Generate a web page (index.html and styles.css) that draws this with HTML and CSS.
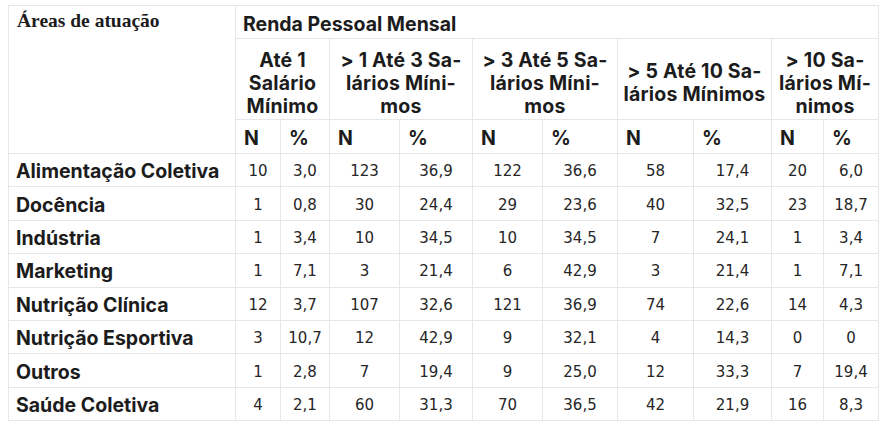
FILE: index.html
```html
<!DOCTYPE html>
<html lang="pt">
<head>
<meta charset="utf-8">
<link rel="stylesheet" href="styles.css">
</head>
<body>
<div class="page">
<table class="tbl">
  <colgroup>
    <col class="c-area">
    <col class="c1"><col class="c2">
    <col class="c3"><col class="c4">
    <col class="c5"><col class="c6">
    <col class="c7"><col class="c8">
    <col class="c9"><col class="c10">
  </colgroup>
  <thead>
    <tr class="r-top">
      <th class="area-h" rowspan="3">Áreas de atuação</th>
      <th class="renda" colspan="10">Renda Pessoal Mensal</th>
    </tr>
    <tr class="r-group">
      <th class="grp" colspan="2">Até 1<br>Salário<br>Mínimo</th>
      <th class="grp" colspan="2">&gt; 1 Até 3 Sa-<br>lários Míni-<br>mos</th>
      <th class="grp" colspan="2">&gt; 3 Até 5 Sa-<br>lários Míni-<br>mos</th>
      <th class="grp" colspan="2">&gt; 5 Até 10 Sa-<br>lários Mínimos</th>
      <th class="grp" colspan="2">&gt; 10 Sa-<br>lários Mí-<br>nimos</th>
    </tr>
    <tr class="r-np">
      <th class="np">N</th><th class="np">%</th>
      <th class="np">N</th><th class="np">%</th>
      <th class="np">N</th><th class="np">%</th>
      <th class="np">N</th><th class="np">%</th>
      <th class="np">N</th><th class="np">%</th>
    </tr>
  </thead>
  <tbody>
    <tr><th class="area">Alimentação Coletiva</th><td>10</td><td>3,0</td><td>123</td><td>36,9</td><td>122</td><td>36,6</td><td>58</td><td>17,4</td><td>20</td><td>6,0</td></tr>
    <tr><th class="area">Docência</th><td>1</td><td>0,8</td><td>30</td><td>24,4</td><td>29</td><td>23,6</td><td>40</td><td>32,5</td><td>23</td><td>18,7</td></tr>
    <tr><th class="area">Indústria</th><td>1</td><td>3,4</td><td>10</td><td>34,5</td><td>10</td><td>34,5</td><td>7</td><td>24,1</td><td>1</td><td>3,4</td></tr>
    <tr><th class="area">Marketing</th><td>1</td><td>7,1</td><td>3</td><td>21,4</td><td>6</td><td>42,9</td><td>3</td><td>21,4</td><td>1</td><td>7,1</td></tr>
    <tr><th class="area">Nutrição Clínica</th><td>12</td><td>3,7</td><td>107</td><td>32,6</td><td>121</td><td>36,9</td><td>74</td><td>22,6</td><td>14</td><td>4,3</td></tr>
    <tr><th class="area">Nutrição Esportiva</th><td>3</td><td>10,7</td><td>12</td><td>42,9</td><td>9</td><td>32,1</td><td>4</td><td>14,3</td><td>0</td><td>0</td></tr>
    <tr><th class="area">Outros</th><td>1</td><td>2,8</td><td>7</td><td>19,4</td><td>9</td><td>25,0</td><td>12</td><td>33,3</td><td>7</td><td>19,4</td></tr>
    <tr><th class="area">Saúde Coletiva</th><td>4</td><td>2,1</td><td>60</td><td>31,3</td><td>70</td><td>36,5</td><td>42</td><td>21,9</td><td>16</td><td>8,3</td></tr>
  </tbody>
</table>
</div>
</body>
</html>
```

FILE: styles.css
```css
html, body {
  margin: 0;
  padding: 0;
  background: #ffffff;
}
body {
  width: 884px;
  height: 428px;
  overflow: hidden;
}
.page {
  padding: 5px 0 0 8px;
}
.tbl {
  border-collapse: collapse;
  table-layout: fixed;
  width: 871px;
  color: #1c1c1c;
  font-family: Inter, "Noto Sans", sans-serif;
}
.tbl th, .tbl td {
  border: 1px solid #e6e6e6;
  padding: 0;
}
.c-area { width: 227px; }
.c1 { width: 45px; }
.c2 { width: 49px; }
.c3 { width: 70px; }
.c4 { width: 73px; }
.c5 { width: 70px; }
.c6 { width: 75px; }
.c7 { width: 76px; }
.c8 { width: 78px; }
.c9 { width: 52px; }
.c10 { width: 55px; }

.r-top { height: 33px; }
.r-group { height: 81px; }
.r-np { height: 34px; }
.tbl tbody tr { height: 33.4px; }

.tbl .area-h {
  font-family: "Liberation Serif", "Times New Roman", serif;
  font-weight: bold;
  font-size: 19.5px;
  text-align: left;
  vertical-align: top;
  padding: 4px 0 0 8px;
}
.tbl .renda {
  font-weight: 700;
  font-size: 19.5px;
  text-align: left;
  padding: 4px 0 0 7px;
}
.tbl .grp {
  font-weight: 700;
  font-size: 19.5px;
  letter-spacing: 0.2px;
  line-height: 23px;
  text-align: center;
  white-space: nowrap;
  padding: 8px 0 0 0;
}
.tbl .np {
  font-weight: 700;
  font-size: 19.5px;
  text-align: left;
  padding: 2px 0 0 8px;
}
.tbl .area {
  font-weight: 700;
  font-size: 19.5px;
  text-align: left;
  padding: 2px 0 0 7px;
}
.tbl td {
  font-family: "DejaVu Sans", Verdana, sans-serif;
  font-size: 15px;
  text-align: center;
  color: #262626;
  padding-top: 2px;
}
```
